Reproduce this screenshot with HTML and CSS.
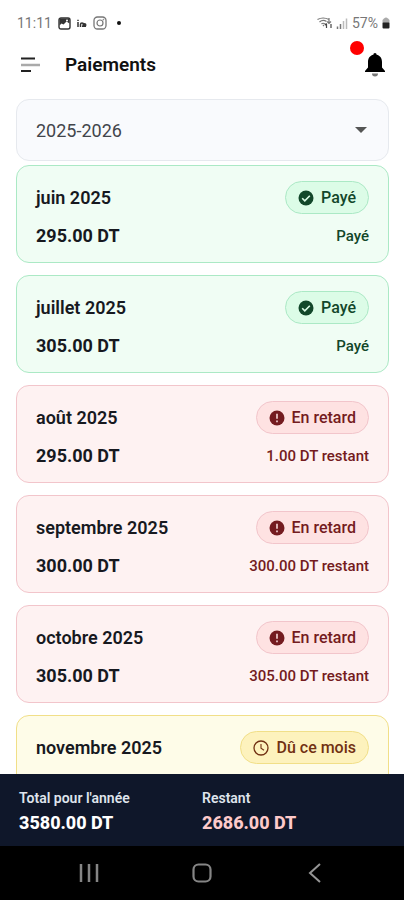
FILE: index.html
```html
<!DOCTYPE html>
<html lang="fr">
<head>
<meta charset="utf-8">
<meta name="viewport" content="width=device-width, initial-scale=1">
<title>Paiements</title>
<link rel="stylesheet" href="styles.css">
</head>
<body>
<svg class="defs" aria-hidden="true">
  <symbol id="check" viewBox="0 0 16 16"><circle cx="8" cy="8" r="7.5" fill="currentColor"/><path d="M4.2 8.2l2.6 2.6 5-5" fill="none" stroke="#dcfce7" stroke-width="1.6"/></symbol>
  <symbol id="alert" viewBox="0 0 16 16"><circle cx="8" cy="8" r="7.5" fill="currentColor"/><path d="M8 3.8v5M8 10.6v1.7" fill="none" stroke="#fee2e2" stroke-width="1.5"/></symbol>
  <symbol id="clock" viewBox="0 0 16 16"><circle cx="8" cy="8" r="7" fill="none" stroke="currentColor" stroke-width="1.3"/><path d="M8 4v4.3l3 1.9" fill="none" stroke="currentColor" stroke-width="1.1"/></symbol>
</svg>
<div class="status">
  <span class="status-group">
    <span class="time">11:11</span>
    <svg width="13" height="13" viewBox="0 0 13 13"><rect x="1" y="1" width="11" height="11" rx="2" fill="#fff" stroke="#333" stroke-width="1.4"/><path d="M1.500 1.500h10v5l-3-2-3 3-2-1-2 2z" fill="#333"/><circle cx="9" cy="3.500" r="1" fill="#fff"/></svg>
    <svg width="10" height="9" viewBox="0 0 10 9"><path d="M1 3v5M1 .8v1.200M3.500 8V5.500a1.500 1.500 0 0 1 3 0V8M5 7.200h4" fill="none" stroke="#333" stroke-width="1.500"/><circle cx="7.500" cy="6" r="2" fill="#333"/></svg>
    <svg width="14" height="14" viewBox="0 0 14 14" fill="none" stroke="#777"><rect x="1" y="1" width="12" height="12" rx="3.500" stroke-width="1.300"/><circle cx="7" cy="7" r="3" stroke-width="1.200"/><circle cx="10.400" cy="3.600" r=".4"/></svg>
    <span class="more-dot"></span>
  </span>
  <span class="status-group status-right">
    <svg width="15" height="12" viewBox="0 0 15 12" fill="none" stroke="#777" stroke-width="1.200"><path d="M.5 2.500Q6-.5 12 2.500M2.500 5Q6 2 9.500 4.500M4.500 7Q6 5.500 8 7M6 8l1 1M12 1v5M10.200 4.500L12 6.500l2-2"/><path d="M9.500 11V6.500M8 8l1.500-1.500M14 7v4" stroke="#444"/></svg>
    <svg width="12" height="11" viewBox="0 0 12 11"><path d="M1.500 11V8.500M4.500 11V6" stroke="#777" stroke-width="1.500"/><path d="M7.500 11V3M10.500 11V.5" stroke="#bbb" stroke-width="1.500"/></svg>
    <span class="battery-text">57%</span>
    <svg width="8" height="12" viewBox="0 0 8 12"><path d="M2 1.500Q4-.5 6 1.500L7.500 3v3h-7V3z" fill="#aaa"/><rect x=".5" y="5.500" width="7" height="6" rx="1" fill="#222"/></svg>
  </span>
</div>
<header class="header">
  <button class="icon-button" aria-label="Menu"><svg width="20" height="16" viewBox="0 0 20 16" fill="none" stroke-width="2"><path d="M0 1.500h14M0 14h10" stroke="#222"/><path d="M0 8h19" stroke="#aaa" stroke-width="2.500"/></svg></button>
  <h1 class="title">Paiements</h1>
  <button class="icon-button bell" aria-label="Notifications"><svg width="22" height="26" viewBox="0 0 22 26"><path d="M11 1c1 0 1.600.7 1.600 1.800 3.600.7 5.400 3.600 5.400 7.200v5.500l3 3.500v1H1v-1l3-3.500V10c0-3.600 1.800-6.500 5.400-7.200C9.400 1.700 10 1 11 1z" fill="#000"/><path d="M8 21.500h6a3 3 0 0 1-6 0z" fill="#777"/></svg><span class="badge"></span></button>
</header>
<main class="content">
  <div class="select-wrap">
    <select class="year" aria-label="Année scolaire"><option>2025-2026</option></select>
    <svg class="caret" width="12" height="6" viewBox="0 0 12 6"><path d="M0 0h12L6 6z" fill="#555"/></svg>
  </div>
  <ul class="list">
    <li class="card paid"><div class="row"><span class="month">juin 2025</span><span class="pill"><svg class="pill-icon"><use href="#check"/></svg>Payé</span></div><div class="row amount-row"><span class="amount">295.00 DT</span><span class="note">Payé</span></div></li>
    <li class="card paid"><div class="row"><span class="month">juillet 2025</span><span class="pill"><svg class="pill-icon"><use href="#check"/></svg>Payé</span></div><div class="row amount-row"><span class="amount">305.00 DT</span><span class="note">Payé</span></div></li>
    <li class="card late"><div class="row"><span class="month">août 2025</span><span class="pill"><svg class="pill-icon"><use href="#alert"/></svg>En retard</span></div><div class="row amount-row"><span class="amount">295.00 DT</span><span class="note">1.00 DT restant</span></div></li>
    <li class="card late"><div class="row"><span class="month">septembre 2025</span><span class="pill"><svg class="pill-icon"><use href="#alert"/></svg>En retard</span></div><div class="row amount-row"><span class="amount">300.00 DT</span><span class="note">300.00 DT restant</span></div></li>
    <li class="card late"><div class="row"><span class="month">octobre 2025</span><span class="pill"><svg class="pill-icon"><use href="#alert"/></svg>En retard</span></div><div class="row amount-row"><span class="amount">305.00 DT</span><span class="note">305.00 DT restant</span></div></li>
    <li class="card due"><div class="row"><span class="month">novembre 2025</span><span class="pill"><svg class="pill-icon"><use href="#clock"/></svg>Dû ce mois</span></div></li>
  </ul>
</main>
<footer class="totals">
  <div><div class="total-label">Total pour l'année</div><div class="total-value">3580.00 DT</div></div>
  <div><div class="total-label">Restant</div><div class="total-value remaining">2686.00 DT</div></div>
</footer>
<nav class="system-nav">
  <button aria-label="Applications récentes"><svg width="20" height="20" viewBox="0 0 20 20"><path d="M2 1v18M10 1v18M18 1v18" stroke="#858585" stroke-width="2.500"/></svg></button>
  <button aria-label="Accueil"><svg width="20" height="20" viewBox="0 0 20 20"><rect x="1.500" y="1.500" width="17" height="17" rx="5" fill="none" stroke="#858585" stroke-width="2.200"/></svg></button>
  <button aria-label="Retour"><svg width="20" height="20" viewBox="0 0 20 20"><path d="M15 1L5 10l10 9" fill="none" stroke="#959595" stroke-width="2"/></svg></button>
</nav>
</body>
</html>
```
FILE: styles.css
```css
* { box-sizing: border-box; }
body {
  margin: 0;
  height: 100vh;
  display: flex;
  flex-direction: column;
  overflow: hidden;
  background: #fff;
  color: #17191f;
  font-family: Roboto, "Liberation Sans", sans-serif;
}
button {
  display: flex;
  padding: 0;
  border: 0;
  background: none;
}
svg { display: block; flex: none; }
.defs { position: absolute; width: 0; height: 0; }
.status {
  display: flex;
  justify-content: space-between;
  height: 46px;
  padding: 0 14px 0 17px;
  font-size: 14px;
  color: #777;
}
.status-group { display: flex; align-items: center; gap: 6px; }
.status-right { gap: 4px; }
.more-dot {
  width: 4px;
  height: 4px;
  margin-left: 4px;
  border-radius: 50%;
  background: #111;
}
.header {
  display: flex;
  align-items: center;
  height: 37px;
  padding: 0 18px 0 21px;
}
.title {
  flex: 1;
  margin: 0 0 0 24px;
  font-size: 19px;
  font-weight: 600;
  color: #111;
}
.bell { position: relative; }
.badge {
  position: absolute;
  left: -14px;
  top: -11px;
  width: 14px;
  height: 14px;
  border-radius: 50%;
  background: #f00;
}
.content {
  flex: 1;
  min-height: 0;
  overflow: hidden;
  padding: 16px 15px 0 16px;
}
.select-wrap { position: relative; }
.year {
  appearance: none;
  display: block;
  width: 100%;
  height: 62px;
  padding: 0 19px;
  border: 1px solid #e6e9ee;
  border-radius: 13px;
  background: #f9fafd;
  font: 400 18px Roboto, sans-serif;
  color: #42454b;
}
.caret {
  position: absolute;
  right: 22px;
  top: 28px;
  pointer-events: none;
}
.list {
  display: flex;
  flex-direction: column;
  gap: 12px;
  margin: 4px 0 0;
  padding: 0;
  list-style: none;
}
.card {
  flex: none;
  height: 98px;
  padding: 15px 19px;
  border: 1px solid;
  border-radius: 13px;
}
.row {
  display: flex;
  align-items: center;
  justify-content: space-between;
}
.amount-row { margin-top: 10px; }
.month { font-size: 18px; font-weight: 600; }
.amount { font-size: 18px; font-weight: 700; line-height: 24px; }
.note { font-size: 15px; font-weight: 500; }
.pill {
  display: flex;
  align-items: center;
  gap: 7px;
  height: 33px;
  padding: 0 12px;
  border: 1px solid;
  border-radius: 17px;
  font-size: 16px;
  font-weight: 500;
}
.pill-icon { width: 16px; height: 16px; }
.paid { background: #f0fdf4; border-color: #abe9c5; }
.paid .pill { background: #dcfce7; border-color: #abe9c5; color: #12472a; }
.paid .note { color: #12472a; }
.late { background: #fef2f2; border-color: #f2c5cb; }
.late .pill { background: #fee2e2; border-color: #f2c5cb; color: #741b20; }
.late .note { color: #741b20; }
.due { background: #fefce8; border-color: #f1df88; }
.due .pill { background: #fdf2bd; border-color: #f1df88; color: #713012; }
.totals {
  display: grid;
  grid-template-columns: 1fr 1fr;
  height: 72px;
  padding: 14px 19px 0;
  background: #0f172a;
}
.total-label {
  font-size: 14px;
  font-weight: 600;
  line-height: 20px;
  color: #dfe4ec;
}
.total-value {
  font-size: 18px;
  font-weight: 800;
  line-height: 30px;
  color: #fff;
}
.remaining { color: #fecaca; }
.system-nav {
  display: flex;
  align-items: center;
  justify-content: space-around;
  height: 54px;
  padding: 0 32px;
  background: #000;
}
```
